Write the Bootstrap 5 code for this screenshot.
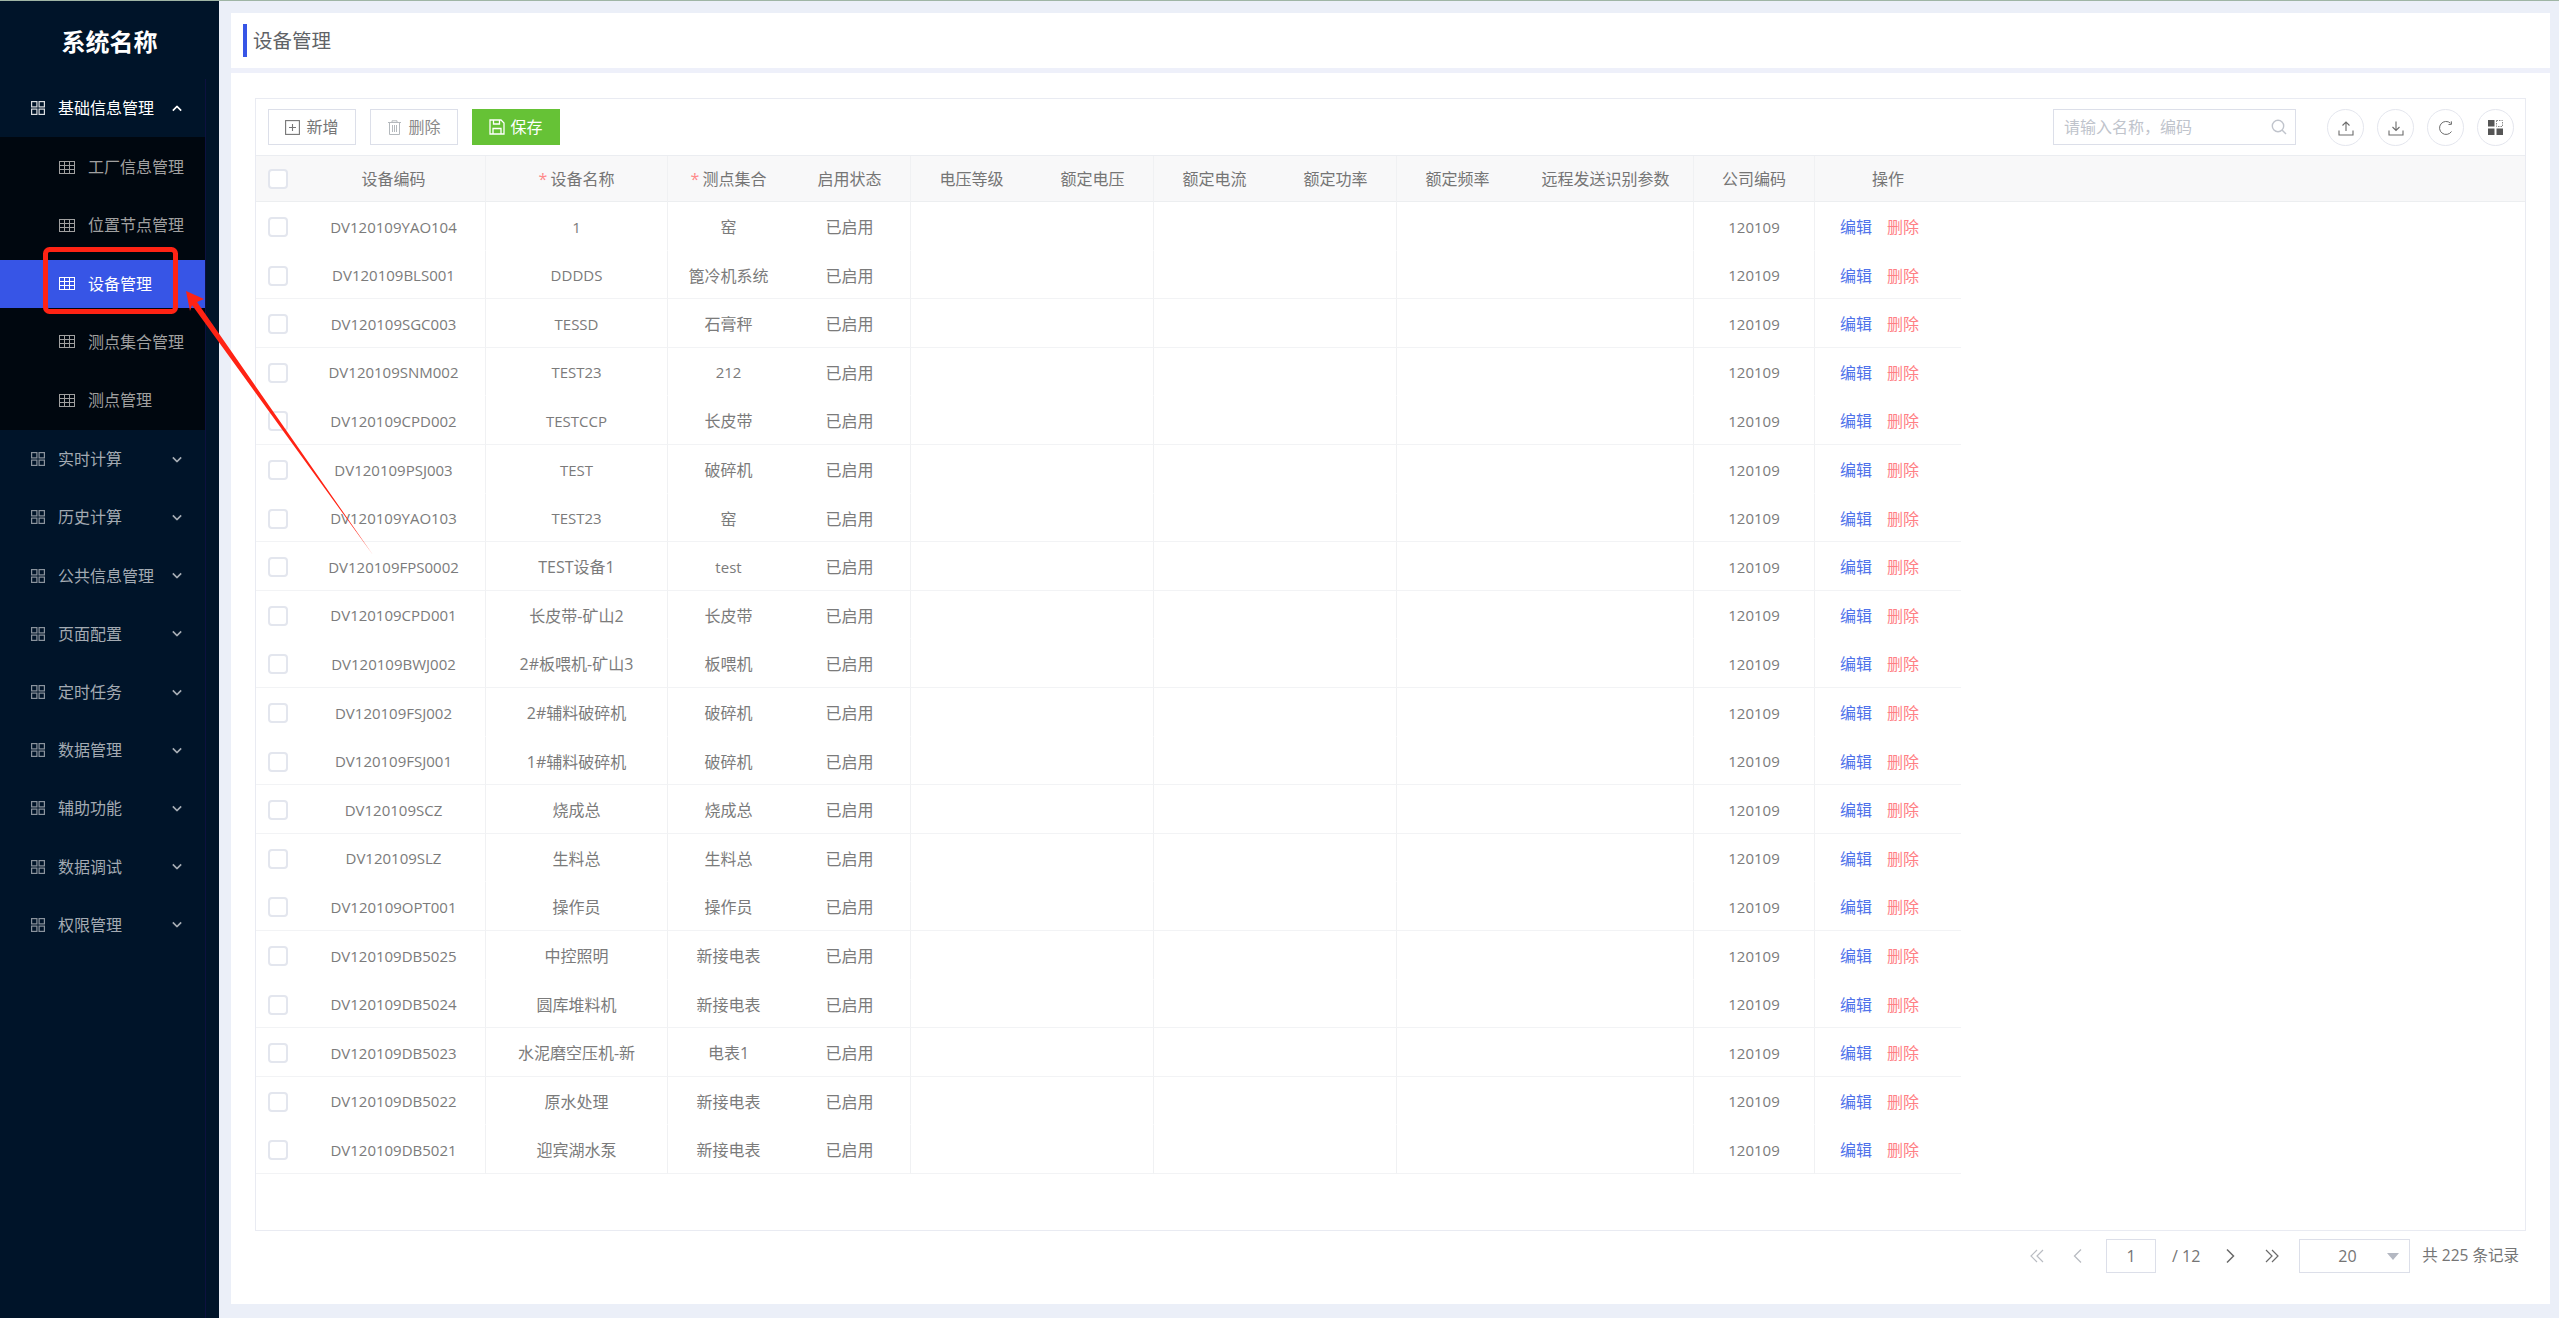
<!DOCTYPE html>
<html lang="zh-CN">
<head>
  <meta charset="UTF-8" />
  <meta name="viewport" content="width=device-width, initial-scale=1.0" />
  <title>设备管理</title>
  <link href="https://cdn.jsdelivr.net/npm/bootstrap@5.3.0/dist/css/bootstrap.min.css" rel="stylesheet"/>
  <style>
    html, body { height: 100%; }
    body { font-family: "Open Sans", "Noto Sans CJK SC", sans-serif; font-size: 16px; color: #757575; background: #ebeff8; overflow: hidden; }
    .app-shell { height: 100vh; border-top: 1px solid #9fb5a5; position: relative; }

    /* sidebar */
    .side { width: 219px; flex: none; background: #001429; color: #a3aab2; }
    .side-logo { height: 78px; padding-top: 4px; font-size: 24px; font-weight: 700; color: #fff; }
    .side-menu { width: 206px; border-right: 1px solid #0d1140; flex: 1 1 auto; }
    .menu-parent { height: 58.2px; padding-left: 31px; padding-right: 23px; color: #a3aab2; text-decoration: none; }
    .menu-parent.is-open { color: #fff; height: 58px; }
    .menu-parent .menu-text { margin-left: 13px; flex: 1 1 auto; }
    .sub-list { background: #00070f; padding: 6px 0; }
    .sub-item { height: 48px; margin-bottom: 10.3px; padding-left: 59px; color: #a0a0a0; text-decoration: none; }
    .sub-item:last-child { margin-bottom: 0; }
    .sub-item .menu-text { margin-left: 13px; }
    .sub-item.is-active { background: #3755e6; color: #fff; }

    /* content */
    .main-area { padding: 12px 9px 14px 12px; min-width: 0; }
    .page-head { height: 55px; flex: none; background: #fff; padding-left: 12px; border-bottom: 0; }
    .page-head span { border-left: 4px solid #3755e6; padding-left: 6px; height: 33px; line-height: 33px; font-size: 19.5px; color: #606266; }
    .head-gap { height: 5px; flex: none; background: #eef0fa; }
    .page-panel { background: #fff; padding: 25px 24px 0 24px; min-height: 0; }
    .grid-box { border: 1px solid #e9ebf2; min-height: 0; }
    .grid-tools { height: 57px; flex: none; padding: 10px 11px 0 12px; border-bottom: 1px solid #ebedf1; }
    .tool-btn { width: 88px; height: 36px; padding: 0; border: 1px solid #dcdfe9; border-radius: 0; background: #fff; color: #757575; font-size: 16px; }
    .tool-btn svg { margin-right: 6px; }
    .tool-btn.btn-muted { color: #8a8a8a; }
    .tool-btn.btn-save { background: #66c236; border-color: #66c236; color: #fff; }
    .tool-btn.btn-save svg { margin-right: 5px; }
    .search-box { width: 243px; height: 36px; margin-right: 31px; border: 1px solid #dcdfe9; padding: 0 8px 0 10px; color: #c0c4cc; }
    .search-box input { border: 0; outline: 0; padding: 0; width: 100%; font-size: 16px; color: #606266; background: transparent; }
    .search-box input::placeholder { color: #c0c4cc; }
    .round-btn { width: 37px; height: 37px; border: 1px solid #e4e6ee; border-radius: 50%; color: #6c6c6c; }

    .dev-table { table-layout: fixed; border-collapse: separate; border-spacing: 0; width: 100%; margin: 0; }
    .dev-table th, .dev-table td { padding: 0; text-align: center; vertical-align: middle; white-space: nowrap; }
    .dev-table th { height: 46px; background: #f8f8f9; font-weight: 400; color: #757575; border-bottom: 1px solid #eceef0; }
    .dev-table td { padding-top: 2px; border-bottom: 1px solid #f2f3f5; color: #7b7b7b; background: #fff; }
    .dev-table .cut { border-right: 1px solid #f0f1f3; }
    .dev-table .chk-cell { text-align: left; padding-left: 12px; }
    .dev-table .filler { border-bottom-color: transparent; }
    .dev-table th.filler { border-bottom-color: #eceef0; }
    .dev-table tbody tr:nth-child(5n+1) td, .dev-table tbody tr:nth-child(5n+3) td, .dev-table tbody tr:nth-child(5n) td { height: 49px; }
    .dev-table tbody tr:nth-child(5n+2) td, .dev-table tbody tr:nth-child(5n+4) td { height: 48px; }
    .dev-table tbody tr:nth-child(5n+1) td, .dev-table tbody tr:nth-child(5n+4) td { border-bottom-color: transparent; }
    .dev-table .latin { font-size: 15px; }
    .dev-table .ops-cell { text-align: left; padding-left: 25px; }
    .star { color: #ff8a8a; margin-right: 3px; }
    .chk { width: 20px; height: 20px; margin: 0; border: 2px solid #e3e6ee; border-radius: 3px; display: block; }
    .op-edit { color: #4f72ea; text-decoration: none; }
    .op-del { color: #ff8085; text-decoration: none; margin-left: 15px; }

    .pager { height: 73px; flex: none; padding: 8px 7px 0 0; }
    .pager-box { height: 34px; border: 1px solid #dcdfe9; background: #fff; color: #757575; }
    .pg-input { width: 50px; }
    .pg-select { width: 111px; padding-left: 38px; padding-right: 10px; margin-left: 19px; }
    .pg-caret { width: 0; height: 0; border-left: 6px solid transparent; border-right: 6px solid transparent; border-top: 7px solid #b4b8c2; margin-left: auto; }
    .pg-off { color: #b9bcc2; }
    .pg-on { color: #6a6a6a; }
    .pg-total { font-size: 15.5px; }
    .m-25 { margin-left: 25px; }
    .m-26 { margin-left: 26px; }
    .m-20 { margin-left: 20px; }
    .m-16 { margin-left: 16px; }
    .m-22 { margin-left: 22px; }
    .m-12 { margin-left: 12px; }

    /* red annotation drawn over the screenshot */
    .note-layer { position: absolute; left: 0; top: -1px; width: 100%; height: 100%; pointer-events: none; }
  </style>
</head>
<body>
  <svg width="0" height="0" class="d-block position-absolute">
    <symbol id="i-grid" viewBox="0 0 14 14"><g fill="none" stroke="currentColor" stroke-width="1.2" opacity=".85"><rect x=".6" y=".6" width="5.300" height="5.300"/><rect x="8.100" y=".6" width="5.300" height="5.300"/><rect x=".6" y="8.100" width="5.300" height="5.300"/><rect x="8.100" y="8.100" width="5.300" height="5.300"/></g></symbol>
    <symbol id="i-table" viewBox="0 0 16 13"><g fill="none" stroke="currentColor" stroke-width="1"><rect x=".5" y=".5" width="15" height="12"/><path d="M.5 4.500h15M.5 8.500h15M5.500.5v12M10.500.5v12"/></g></symbol>
    <symbol id="i-down" viewBox="0 0 12 8"><path d="M1 1.500l5 5 5-5" fill="none" stroke="currentColor" stroke-width="2"/></symbol>
    <symbol id="i-up" viewBox="0 0 12 8"><path d="M1 6.500l5-5 5 5" fill="none" stroke="currentColor" stroke-width="2"/></symbol>
    <symbol id="i-dleft" viewBox="0 0 16 16"><path d="M8 2L2 8l6 6M14 2L8 8l6 6" fill="none" stroke="currentColor" stroke-width="1.2"/></symbol>
    <symbol id="i-left" viewBox="0 0 16 16"><path d="M11 1.500L4.500 8l6.500 6.500" fill="none" stroke="currentColor" stroke-width="1.3"/></symbol>
    <symbol id="i-right" viewBox="0 0 16 16"><path d="M5 1.500L11.500 8 5 14.500" fill="none" stroke="currentColor" stroke-width="1.5"/></symbol>
    <symbol id="i-dright" viewBox="0 0 16 16"><path d="M2 2l6 6-6 6M8 2l6 6-6 6" fill="none" stroke="currentColor" stroke-width="1.2"/></symbol>
  </svg>

  <div class="app-shell d-flex">
    <aside class="side d-flex flex-column">
      <div class="side-logo d-flex align-items-center justify-content-center">系统名称</div>
      <nav class="side-menu" id="sideMenu"></nav>
    </aside>

    <main class="main-area d-flex flex-column flex-grow-1">
      <div class="page-head d-flex align-items-center"><span>设备管理</span></div>
      <div class="head-gap"></div>
      <div class="page-panel d-flex flex-column flex-grow-1">
        <div class="grid-box d-flex flex-column flex-grow-1">
          <div class="grid-tools d-flex align-items-start">
            <div class="d-flex" style="gap:14px">
              <button class="btn tool-btn d-flex align-items-center justify-content-center" type="button">
                <svg width="15" height="15" viewBox="0 0 15 15"><g fill="none" stroke="currentColor" stroke-width="1.100"><rect x=".6" y=".6" width="13.800" height="13.800"/><path d="M7.500 4v7M4 7.500h7"/></g></svg>新增
              </button>
              <button class="btn tool-btn btn-muted d-flex align-items-center justify-content-center" type="button">
                <svg width="15" height="15" viewBox="0 0 15 15" class="text-secondary opacity-50"><g fill="none" stroke="currentColor" stroke-width="1"><path d="M1 2.500h13M5 2.500V.8h5v1.700M2.500 2.500v12h10v-12M5.500 5v7M7.500 5v7M9.500 5v7"/></g></svg>删除
              </button>
              <button class="btn tool-btn btn-save d-flex align-items-center justify-content-center" type="button">
                <svg width="16" height="16" viewBox="0 0 16 16"><g fill="none" stroke="currentColor" stroke-width="1.300"><path d="M1 1h11l3 3v11H1z"/><path d="M4.500 1v4h6V1M4 15V9.500h8V15"/></g></svg>保存
              </button>
            </div>
            <div class="ms-auto d-flex align-items-center search-box">
              <input type="text" placeholder="请输入名称，编码" />
              <svg width="16" height="16" viewBox="0 0 16 16" class="flex-shrink-0"><g fill="none" stroke="currentColor" stroke-width="1.400"><circle cx="7" cy="7" r="5.700"/><path d="M11 11l4 4"/></g></svg>
            </div>
            <div class="d-flex" style="gap:13px">
              <div class="round-btn d-flex align-items-center justify-content-center">
                <svg width="16" height="16" viewBox="0 0 16 16"><g fill="none" stroke="currentColor" stroke-width="1.100"><path d="M8 11V2M4.500 5.500L8 2l3.500 3.500M1 10.500v4.500h14v-4.500"/></g></svg>
              </div>
              <div class="round-btn d-flex align-items-center justify-content-center">
                <svg width="16" height="16" viewBox="0 0 16 16"><g fill="none" stroke="currentColor" stroke-width="1.100"><path d="M8 1.500v9M4.500 7L8 10.500 11.500 7M1 10.500v4.500h14v-4.500"/></g></svg>
              </div>
              <div class="round-btn d-flex align-items-center justify-content-center">
                <svg width="16" height="16" viewBox="0 0 16 16"><g fill="none" stroke="currentColor" stroke-width="1"><path d="M13.500 11.500A6.500 6.500 0 1 1 12.500 3.200"/><path d="M10.500 4.500l3-.2-.2-3"/></g></svg>
              </div>
              <div class="round-btn d-flex align-items-center justify-content-center">
                <svg width="15" height="15" viewBox="0 0 15 15"><rect width="6.500" height="6.500" fill="#555"/><rect x="8.500" y=".5" width="6" height="6" fill="none" stroke="#888" stroke-width="1" stroke-dasharray="1.500 1"/><rect y="8.500" width="6.500" height="6.500" fill="#555"/><rect x="8.500" y="8.500" width="6.500" height="6.500" fill="#555"/></svg>
              </div>
            </div>
          </div>

          <table class="table dev-table">
            <colgroup>
              <col style="width:46px"><col style="width:184px"><col style="width:182px"><col style="width:121px"><col style="width:122px"><col style="width:121px"><col style="width:122px"><col style="width:121px"><col style="width:122px"><col style="width:121px"><col style="width:176px"><col style="width:121px"><col style="width:146px"><col>
            </colgroup>
            <thead>
              <tr>
                <th class="chk-cell"><input class="form-check-input chk" type="checkbox" /></th>
                <th class="cut">设备编码</th>
                <th class="cut"><span class="star">*</span>设备名称</th>
                <th><span class="star">*</span>测点集合</th>
                <th class="cut">启用状态</th>
                <th>电压等级</th>
                <th class="cut">额定电压</th>
                <th>额定电流</th>
                <th class="cut">额定功率</th>
                <th>额定频率</th>
                <th class="cut">远程发送识别参数</th>
                <th class="cut">公司编码</th>
                <th>操作</th>
                <th class="filler"></th>
              </tr>
            </thead>
            <tbody id="rows"></tbody>
          </table>
        </div>

        <div class="pager d-flex align-items-start justify-content-end">
          <div class="d-flex align-items-center" style="height:34px">
            <svg width="16" height="16" class="pg-off"><use href="#i-dleft"/></svg>
            <svg width="16" height="16" class="pg-off m-25"><use href="#i-left"/></svg>
            <div class="pager-box pg-input m-20 d-flex align-items-center justify-content-center">1</div>
            <span class="m-16">/ 12</span>
            <svg width="16" height="16" class="pg-on m-22"><use href="#i-right"/></svg>
            <svg width="16" height="16" class="pg-on m-26"><use href="#i-dright"/></svg>
            <div class="pager-box pg-select d-flex align-items-center">20<span class="pg-caret"></span></div>
            <span class="m-12 pg-total">共 225 条记录</span>
          </div>
        </div>
      </div>
    </main>

    <svg class="note-layer">
      <rect x="45.500" y="249.500" width="130" height="62" rx="4" fill="none" stroke="#ff2314" stroke-width="5"/>
      <polygon points="186,291 204,299 197,302 373,555 192,305 190,311" fill="#ff2314"/>
    </svg>
  </div>

  <script>
    const parents = ["实时计算", "历史计算", "公共信息管理", "页面配置", "定时任务", "数据管理", "辅助功能", "数据调试", "权限管理"];
    const subs = ["工厂信息管理", "位置节点管理", "设备管理", "测点集合管理", "测点管理"];

    function parentItem(name, open) {
      return `<a href="#" class="menu-parent d-flex align-items-center ${open ? "is-open" : ""}">
        <svg width="14" height="14"><use href="#i-grid"/></svg>
        <span class="menu-text">${name}</span>
        <svg width="10" height="7" viewBox="0 0 12 8"><use href="#${open ? "i-up" : "i-down"}"/></svg></a>`;
    }

    let menu = parentItem("基础信息管理", true) + '<div class="sub-list">';
    subs.forEach((name, i) => {
      menu += `<a href="#" class="sub-item d-flex align-items-center ${i === 2 ? "is-active" : ""}">
        <svg width="16" height="13"><use href="#i-table"/></svg><span class="menu-text">${name}</span></a>`;
    });
    menu += "</div>" + parents.map(name => parentItem(name, false)).join("");
    document.getElementById("sideMenu").innerHTML = menu;

    const devices = [
      ["DV120109YAO104", "1", "窑"],
      ["DV120109BLS001", "DDDDS", "篦冷机系统"],
      ["DV120109SGC003", "TESSD", "石膏秤"],
      ["DV120109SNM002", "TEST23", "212"],
      ["DV120109CPD002", "TESTCCP", "长皮带"],
      ["DV120109PSJ003", "TEST", "破碎机"],
      ["DV120109YAO103", "TEST23", "窑"],
      ["DV120109FPS0002", "TEST设备1", "test"],
      ["DV120109CPD001", "长皮带-矿山2", "长皮带"],
      ["DV120109BWJ002", "2#板喂机-矿山3", "板喂机"],
      ["DV120109FSJ002", "2#辅料破碎机", "破碎机"],
      ["DV120109FSJ001", "1#辅料破碎机", "破碎机"],
      ["DV120109SCZ", "烧成总", "烧成总"],
      ["DV120109SLZ", "生料总", "生料总"],
      ["DV120109OPT001", "操作员", "操作员"],
      ["DV120109DB5025", "中控照明", "新接电表"],
      ["DV120109DB5024", "圆库堆料机", "新接电表"],
      ["DV120109DB5023", "水泥磨空压机-新", "电表1"],
      ["DV120109DB5022", "原水处理", "新接电表"],
      ["DV120109DB5021", "迎宾湖水泵", "新接电表"]
    ];

    const latin = s => /^[\x00-\x7f]+$/.test(s) ? "latin" : "";
    document.getElementById("rows").innerHTML = devices.map(d => `<tr>
      <td class="chk-cell"><input class="form-check-input chk" type="checkbox" /></td>
      <td class="cut ${latin(d[0])}">${d[0]}</td>
      <td class="cut ${latin(d[1])}">${d[1]}</td>
      <td class="${latin(d[2])}">${d[2]}</td>
      <td class="cut">已启用</td>
      <td></td><td class="cut"></td><td></td><td class="cut"></td><td></td><td class="cut"></td>
      <td class="cut latin">120109</td>
      <td class="ops-cell"><a href="#" class="op-edit">编辑</a><a href="#" class="op-del">删除</a></td>
      <td class="filler"></td>
    </tr>`).join("");
  </script>
  <script src="https://cdn.jsdelivr.net/npm/bootstrap@5.3.0/dist/js/bootstrap.bundle.min.js"></script>
</body>
</html>
